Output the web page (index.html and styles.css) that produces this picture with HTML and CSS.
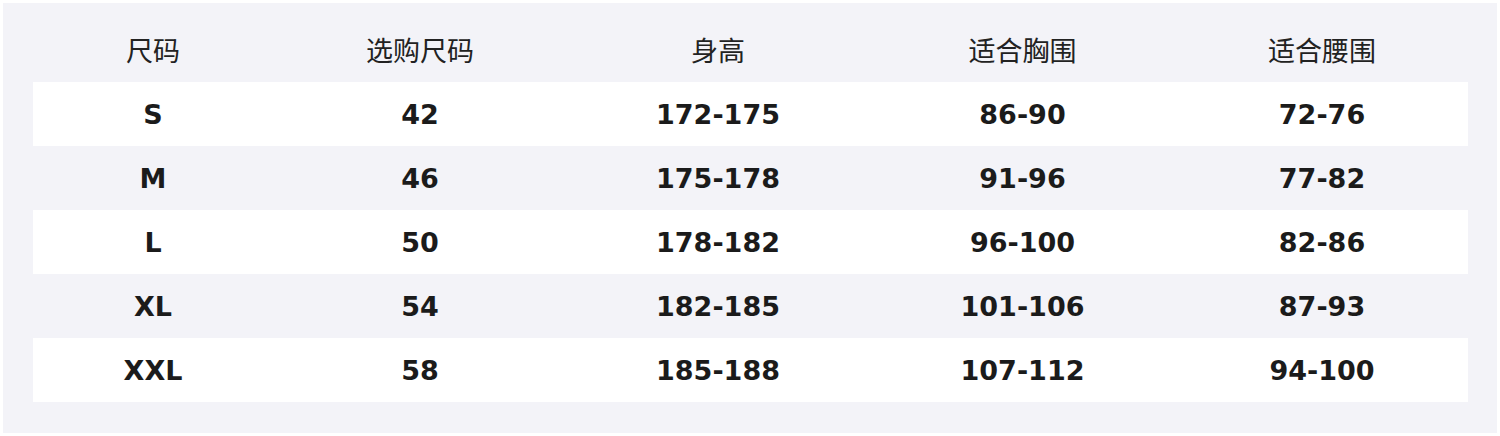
FILE: index.html
```html
<!DOCTYPE html>
<html lang="zh">
<head>
<meta charset="utf-8">
<link rel="stylesheet" href="styles.css">
</head>
<body>
<div class="panel">
  <div class="row head">
    <div>尺码</div><div>选购尺码</div><div>身高</div><div>适合胸围</div><div>适合腰围</div>
  </div>
  <div class="row white">
    <div>S</div><div>42</div><div>172-175</div><div>86-90</div><div>72-76</div>
  </div>
  <div class="row">
    <div>M</div><div>46</div><div>175-178</div><div>91-96</div><div>77-82</div>
  </div>
  <div class="row white">
    <div>L</div><div>50</div><div>178-182</div><div>96-100</div><div>82-86</div>
  </div>
  <div class="row">
    <div>XL</div><div>54</div><div>182-185</div><div>101-106</div><div>87-93</div>
  </div>
  <div class="row white">
    <div>XXL</div><div>58</div><div>185-188</div><div>107-112</div><div>94-100</div>
  </div>
</div>
</body>
</html>
```
FILE: styles.css
```css
html, body {
  margin: 0;
  padding: 0;
  background: #ffffff;
}
body {
  width: 1500px;
  height: 436px;
  overflow: hidden;
}
.panel {
  margin: 3px;
  width: 1494px;
  height: 430px;
  box-sizing: border-box;
  background: #f3f3f8;
  padding: 15px 29px 31px 30px;
}
.row {
  display: grid;
  grid-template-columns: 240px 294px 302px 307px 292px;
  height: 64px;
  line-height: 64px;
  text-align: center;
  font-family: "DejaVu Sans", sans-serif;
  font-weight: bold;
  font-size: 27px;
  color: #1b1b1b;
}
.row > div {
  padding-top: 1px;
}
.row.white {
  background: #ffffff;
}
.row.head {
  font-family: "Noto Sans CJK SC", sans-serif;
  font-weight: normal;
  font-size: 27px;
  color: #222222;
}
.row.head > div {
  padding-top: 0;
}
```
